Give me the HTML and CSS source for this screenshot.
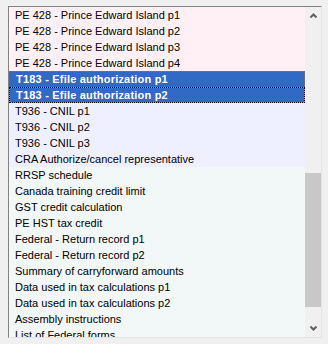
FILE: index.html
```html
<!DOCTYPE html>
<html lang="en">
<head>
  <meta charset="UTF-8" />
  <title>Forms list</title>
  <link rel="stylesheet" href="styles.css">
</head>
<body>

  <div class="listbox">
    <ul class="items">
      <li class="item pink">PE 428 - Prince Edward Island p1</li>
      <li class="item pink">PE 428 - Prince Edward Island p2</li>
      <li class="item pink">PE 428 - Prince Edward Island p3</li>
      <li class="item pink">PE 428 - Prince Edward Island p4</li>
      <li class="item selected">T183 - Efile authorization p1</li>
      <li class="item selected focused">T183 - Efile authorization p2</li>
      <li class="item lavender">T936 - CNIL p1</li>
      <li class="item lavender">T936 - CNIL p2</li>
      <li class="item lavender">T936 - CNIL p3</li>
      <li class="item lavender">CRA Authorize/cancel representative</li>
      <li class="item">RRSP schedule</li>
      <li class="item">Canada training credit limit</li>
      <li class="item">GST credit calculation</li>
      <li class="item">PE HST tax credit</li>
      <li class="item">Federal - Return record p1</li>
      <li class="item">Federal - Return record p2</li>
      <li class="item">Summary of carryforward amounts</li>
      <li class="item">Data used in tax calculations p1</li>
      <li class="item">Data used in tax calculations p2</li>
      <li class="item">Assembly instructions</li>
      <li class="item">List of Federal forms</li>
    </ul>
    <div class="scrollbar">
      <div class="sb-btn">
        <svg width="7" height="5" viewBox="0 0 7 5"><polyline points="0.5,4.5 3.5,1.5 6.5,4.5" fill="none" stroke="#606060" stroke-width="2"/></svg>
      </div>
      <div class="sb-track">
        <div class="sb-thumb"></div>
      </div>
      <div class="sb-btn">
        <svg width="7" height="5" viewBox="0 0 7 5"><polyline points="0.5,0.5 3.5,3.5 6.5,0.5" fill="none" stroke="#606060" stroke-width="2"/></svg>
      </div>
    </div>
  </div>

</body>
</html>
```

FILE: styles.css
```css
* {
  margin: 0;
  padding: 0;
  box-sizing: border-box;
}

body {
  background: #f0f0f0;
  font-family: "Liberation Sans", Arial, sans-serif;
  font-size: 11px;
  color: #000;
}

.listbox {
  display: flex;
  width: 314px;
  height: 332px;
  margin: 6px 0 0 8px;
  border-top: 1px solid #828282;
  border-left: 1px solid #828282;
  border-right: 1px solid #e3e3e3;
  border-bottom: 1px solid #e3e3e3;
  overflow: hidden;
}

.items {
  list-style: none;
  width: 296px;
  overflow: hidden;
  background: #f2f7f8;
}

.item {
  height: 16px;
  line-height: 16px;
  padding-left: 6px;
  white-space: nowrap;
  background: #f2f7f8;
}

.item.pink {
  background: #fff0f5;
}

.item.lavender {
  background: #eff0ff;
}

.item.selected {
  background: #316ac5;
  color: #fff;
  font-weight: bold;
  letter-spacing: 0.2px;
  padding-left: 7px;
  border-top: 1px solid #6e6e6e;
  border-right: 1px solid #6e6e6e;
  line-height: 14px;
}

.item.focused {
  border: 1px dotted #000;
  background: linear-gradient(#316ac5, #316ac5) padding-box, #c99a3c;
  padding-left: 6px;
}

.scrollbar {
  width: 16px;
  display: flex;
  flex-direction: column;
  background: #f0f0f0;
}

.sb-btn {
  height: 17px;
  display: flex;
  align-items: center;
  justify-content: center;
  padding-left: 1px;
}

.sb-track {
  flex: 1;
}

.sb-thumb {
  margin-top: 149px;
  height: 134px;
  background: #c8c8c8;
}
```
